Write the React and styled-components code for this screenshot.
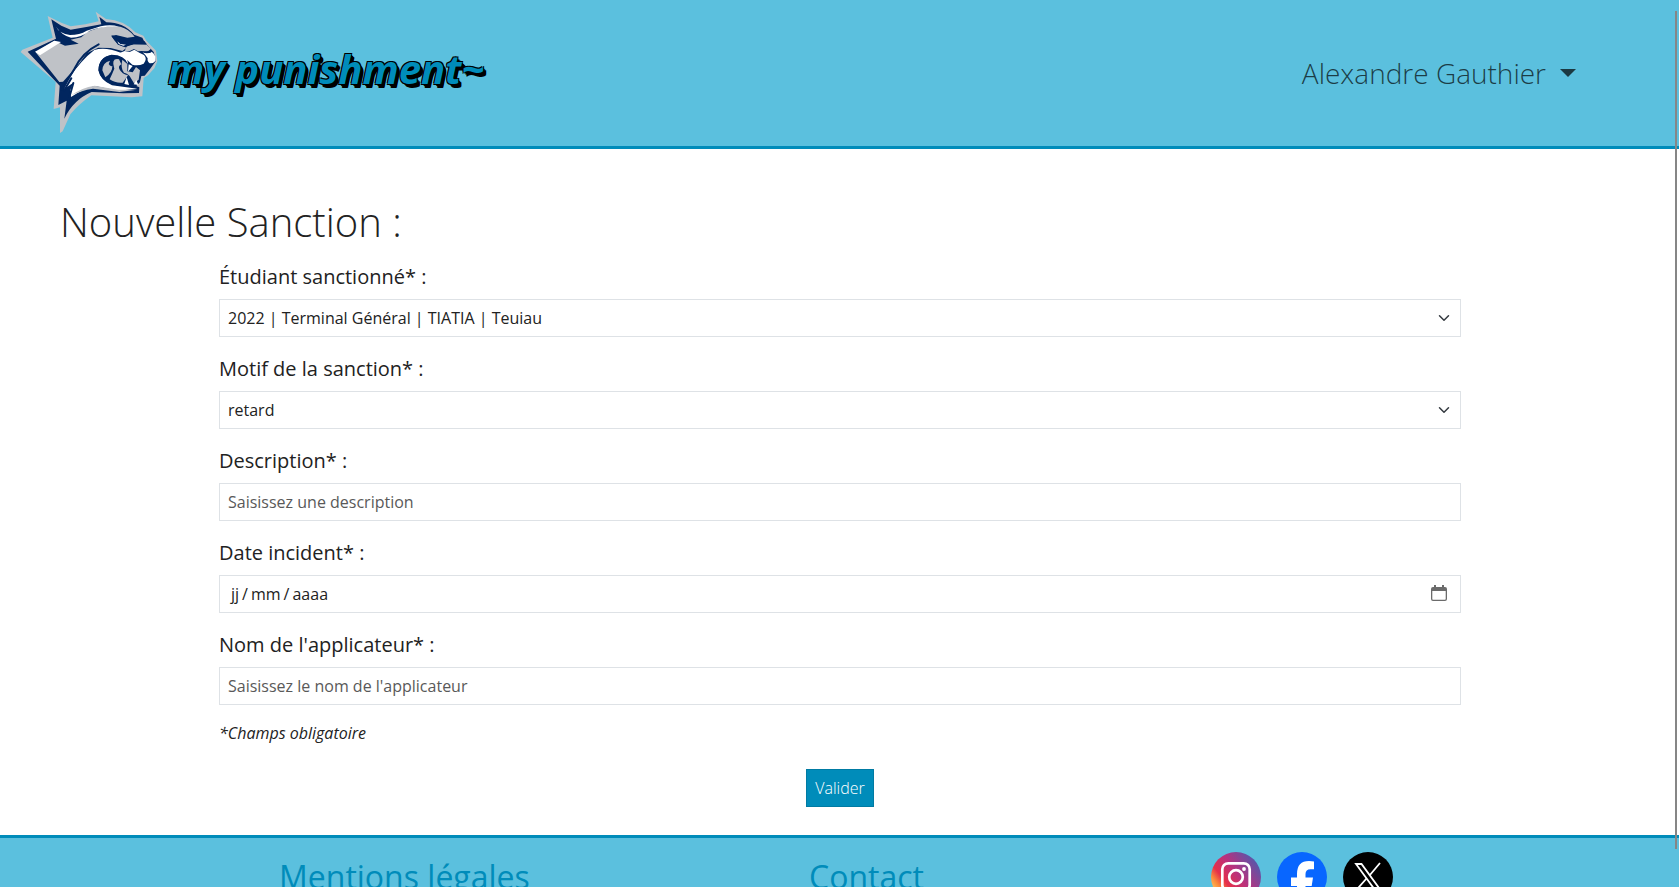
import React from "react";
import styled, { createGlobalStyle } from "styled-components";

const GlobalStyle = createGlobalStyle`
  *, *::before, *::after { box-sizing: border-box; }
  html, body, #root { height: 100%; }
  body {
    margin: 0;
    overflow: hidden;
    background: #fff;
    color: #222;
    font: 400 16px/1.5 "Open Sans", "Noto Sans", sans-serif;
  }
`;

const Page = styled.div`
  height: 100vh;
  overflow: hidden;
  display: flex;
  flex-direction: column;
`;

const Header = styled.header`
  flex: none;
  height: 149px;
  padding: 0 103px 2px 18px;
  display: flex;
  align-items: center;
  justify-content: space-between;
  background: #5bc0de;
  border-bottom: 3px solid #008cba;
`;

const Brand = styled.a`
  display: flex;
  align-items: center;
  color: #008cba;
`;

const Logo = styled.svg`
  display: block;
  width: 144px;
  height: 128px;
`;

const BrandName = styled.span`
  margin: 0 0 6px 6px;
  font-size: 40px;
  font-weight: 700;
  font-style: italic;
  line-height: 60px;
  white-space: nowrap;
  text-shadow: -1px -1px 0 #000, 1px -1px 0 #000, -1px 1px 0 #000, 1px 1px 0 #000, 2px 2px 0 #000, 3px 3px 0 #000,
    3px 4px 0 #000;
`;

const UserMenu = styled.button`
  display: flex;
  align-items: center;
  gap: 14px;
  padding: 2px 0 0;
  border: 0;
  background: none;
  color: rgba(0, 0, 0, 0.7);
  font: 300 28px/42px "Open Sans", sans-serif;

  &::after {
    content: "";
    border: 8px solid transparent;
    border-top-color: currentColor;
    border-bottom: 0;
  }
`;

const Main = styled.main`
  flex: none;
  height: 686px;
  padding: 49px 60px 0;
`;

const Title = styled.h1`
  margin: 0;
  font-size: 40px;
  font-weight: 300;
  line-height: 48px;
`;

const Form = styled.form`
  width: 1242px;
  margin: 13px auto 0;
  display: flex;
  flex-direction: column;
`;

const Field = styled.div`
  height: 92px;
`;

const Label = styled.label`
  display: block;
  height: 40px;
  padding-left: 0.5px;
  font-size: 20px;
  line-height: 36px;
`;

const Control = styled.div`
  height: 38px;
  padding: 0 8px 0 8.5px;
  display: flex;
  align-items: center;
  justify-content: space-between;
  border: 1px solid #dee2e6;
  color: ${(p) => (p.$placeholder ? "#595959" : "#222")};
`;

const DateParts = styled.span`
  display: flex;
  gap: 3px;
  padding-left: 3px;
`;

const CalendarIcon = styled.svg`
  margin: 0 5px 2px 0;
  width: 16px;
  height: 16px;
`;

const Note = styled.em`
  margin-top: 2px;
  padding-left: 0.5px;
  line-height: 24px;
`;

const Submit = styled.button`
  align-self: center;
  width: 68px;
  height: 38px;
  margin-top: 24px;
  padding: 0 0 0 1px;
  border: 1px solid #007ba3;
  background: #008cba;
  color: #fff;
  font: 300 16px/24px "Open Sans", sans-serif;
`;

const Footer = styled.footer`
  flex: none;
  height: 110px;
  padding: 14px 0 0 279px;
  display: flex;
  align-items: flex-start;
  background: #5bc0de;
  border-top: 3px solid #008cba;
`;

const FooterLink = styled.a`
  width: ${(p) => p.$width}px;
  color: #008cba;
  font-size: 32px;
  line-height: 50px;
`;

const Socials = styled.div`
  display: flex;
  gap: 16px;

  svg {
    display: block;
    width: 50px;
    height: 50px;
  }
`;

const ScrollThumb = styled.div`
  position: fixed;
  top: 11px;
  right: 2px;
  width: 2px;
  height: 838px;
  background: #868686;
`;

function WildcatLogo() {
  return (
    <Logo viewBox="24 24 432 384" aria-label="Wildcat">
      <path fill="#bfc2c7" d="M113 48 154 68 182 79 226 73 266 64 257 35 288 57Q342 60 376 97L400 107 409 122 438 152 442 184 433 205 414 226 401 234 397 289 365 292 244 286Q205 314 181 343L158 394 150 399 150 322 131 327 137 246 32 156 37 149 128 113Z" />
      <path fill="#01265f" d="M124 58 154 77 182 89 229 81 274 73 268 50 289 67Q341 67 372 104L397 113 404 127 431 156 438 182 422 205 404 227 394 228 390 246 379 258 388 262 387 279 340 280 245 276Q190 299 163 356L170 302 145 315 149 257 53 155 138 116Z" />
      <path fill="#bfc2c7" d="M77 157 133 122 165 137 206 131 182 119 214 112 231 97Q285 71 331 80 356 86 374 110L352 113 318 105 304 109 324 134 350 143 337 153 302 144 265 143 230 160 207 191 159 245 148 246Z" />
      <path fill="#fff" d="M75 155 90 166 153 126 133 122ZM138 80Q148 101 180 105 209 105 230 92L272 79Q302 72 327 80 280 77 239 92 216 112 183 113 157 107 138 80Z" />
      <path fill="#fff" d="M178 234Q212 182 253 150 286 140 332 158L351 173 354 192Q332 170 302 166 267 173 265 211 271 241 306 256L382 266 325 272 255 258Q218 267 183 291L180 272 190 248 163 266Z" />
      <path fill="#bfc2c7" d="M180 288Q216 262 254 257L324 269 381 269 328 276 249 266Q213 271 180 288Z" />
      <path fill="none" stroke="#01265f" strokeWidth="6" strokeLinecap="round" d="M266 133Q217 157 193 207L155 270M184 235 162 272M190 249 174 306" />
      <path fill="#01265f" d="M354 193Q345 164 304 164 264 173 266 211 274 248 320 256L373 262 389 246 392 207 380 195Z" />
      <path fill="#bfc2c7" d="M300 182Q278 187 277 211L286 232Q308 217 307 198 300 200 296 192ZM327 178Q302 173 313 206 306 223 299 238 316 250 338 248L354 226Q336 223 328 207 324 198 334 193Z" />
      <path fill="#bfc2c7" d="M337 179Q331 205 342 218 357 222 362 233L372 250 386 239 390 211 378 201 368 217 352 214 352 192Z" />
      <path fill="#fff" d="M321 162 344 153 359 156 373 149 388 158 402 165Q413 176 401 191 385 199 367 194L349 178Z" />
      <path fill="#fff" d="M398 157Q413 164 425 155 438 165 437 182 430 191 419 190 411 184 413 175 407 165 398 157Z" />
      <path fill="#bfc2c7" d="M351 137 371 133 410 134 423 146 413 155 395 153 384 154 372 147 358 154 344 153Z" />
      <path fill="#01265f" d="m304 106 19 3 24 12 56 2 7 9-39 1-23 7q-26 1-44-34" />
      <path fill="#fff" d="M322 124 331 132 348 134 340 137 326 132ZM356 193 354 215 368 198ZM350 231 357 255 343 252ZM379 240 385 255 371 253Z" />
      <path fill="#01265f" d="M398 194 408 194 412 201 401 226ZM397 155 411 154 424 151 424 157Q411 162 397 155Z" />
    </Logo>
  );
}

function Chevron() {
  return (
    <svg width="12" height="12" viewBox="0 0 16 16" fill="none">
      <path stroke="#343a40" strokeLinecap="round" strokeLinejoin="round" strokeWidth="2" d="m2 5 6 6 6-6" />
    </svg>
  );
}

const ChevronSlot = styled.span`
  display: flex;
  margin-right: 2px;
`;

function Calendar() {
  return (
    <CalendarIcon viewBox="0 0 16 16" fill="#6b6b6b">
      <path d="M3 0h2v2h6V0h2v2h1q2 0 2 2v10q0 2-2 2H2q-2 0-2-2V4q0-2 2-2h1ZM1.300 6v8q0 .7.7.7h12q.7 0 .7-.7V6Z" fillRule="evenodd" />
    </CalendarIcon>
  );
}

function Instagram() {
  return (
    <svg viewBox="0 0 50 50" aria-label="Instagram">
      <defs>
        <linearGradient id="ig" x1="0.05" y1="0.85" x2="0.9" y2="0.2">
          <stop offset="0" stopColor="#ffd968" />
          <stop offset="0.18" stopColor="#fb8a3a" />
          <stop offset="0.32" stopColor="#e6304a" />
          <stop offset="0.6" stopColor="#b8327e" />
          <stop offset="1" stopColor="#5b55a8" />
        </linearGradient>
      </defs>
      <circle cx="25" cy="25" r="25" fill="url(#ig)" />
      <g fill="none" stroke="#fff" strokeWidth="2.7">
        <rect x="11.3" y="11.3" width="27.4" height="27.4" rx="6" />
        <circle cx="25" cy="25" r="6.8" />
      </g>
      <circle cx="33" cy="17" r="1.9" fill="#fff" />
    </svg>
  );
}

function Facebook() {
  return (
    <svg viewBox="0 0 50 50" aria-label="Facebook">
      <circle cx="25" cy="25" r="25" fill="#0866ff" />
      <path fill="#fff" d="M20 50V34h-6v-8.500h6V22q0-13 12-13 3 0 5 .6v7.600h-3.500q-5 0-5 4.800v3.500H36L34.700 34H28.500v16Z" />
    </svg>
  );
}

function XLogo() {
  return (
    <svg viewBox="0 0 50 50" aria-label="X">
      <circle cx="25" cy="25" r="25" />
      <g fill="none" stroke="#fff" strokeWidth="1.8">
        <path d="M13 12h5.500l19 26H32Z" />
        <path d="M37 11 26.500 23.500M23.500 26.500 12.500 39" />
      </g>
    </svg>
  );
}

const fields = [
  { label: "Étudiant sanctionné* :", value: "2022 | Terminal Général | TIATIA | Teuiau", kind: "select" },
  { label: "Motif de la sanction* :", value: "retard", kind: "select" },
  { label: "Description* :", value: "Saisissez une description", kind: "text" },
  { label: "Date incident* :", kind: "date" },
  { label: "Nom de l'applicateur* :", value: "Saisissez le nom de l'applicateur", kind: "text" },
];

function FormField({ label, value, kind }) {
  return (
    <Field>
      <Label>{label}</Label>
      <Control $placeholder={kind === "text"}>
        {kind === "date" ? (
          <DateParts>
            <span>jj</span><span>/</span><span>mm</span><span>/</span><span>aaaa</span>
          </DateParts>
        ) : (
          <span>{value}</span>
        )}
        {kind === "select" && <ChevronSlot><Chevron /></ChevronSlot>}
        {kind === "date" && <Calendar />}
      </Control>
    </Field>
  );
}

export default function App() {
  return (
    <Page>
      <GlobalStyle />
      <Header>
        <Brand>
          <WildcatLogo />
          <BrandName>my punishment~</BrandName>
        </Brand>
        <UserMenu>Alexandre Gauthier</UserMenu>
      </Header>
      <Main>
        <Title>Nouvelle Sanction :</Title>
        <Form>
          {fields.map((f) => (
            <FormField key={f.label} {...f} />
          ))}
          <Note>*Champs obligatoire</Note>
          <Submit type="button">Valider</Submit>
        </Form>
      </Main>
      <Footer>
        <FooterLink $width={530}>Mentions légales</FooterLink>
        <FooterLink $width={402}>Contact</FooterLink>
        <Socials>
          <Instagram />
          <Facebook />
          <XLogo />
        </Socials>
      </Footer>
      <ScrollThumb />
    </Page>
  );
}
